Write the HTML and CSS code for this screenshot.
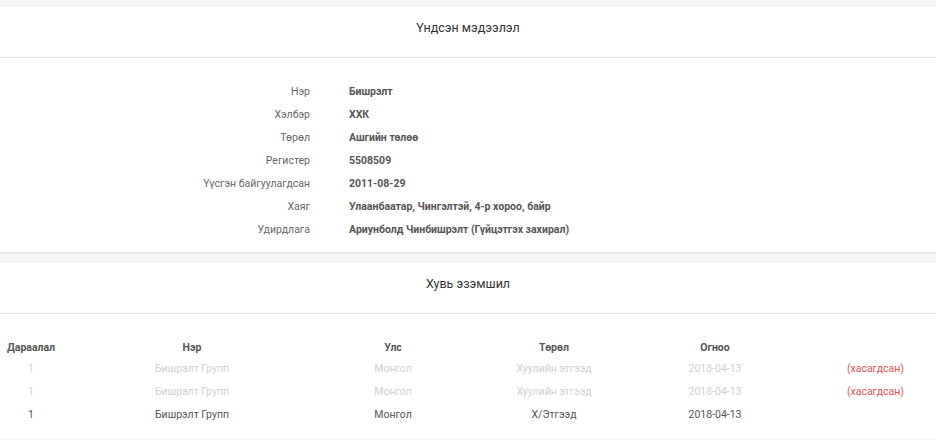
FILE: index.html
```html
<!DOCTYPE html>
<html lang="mn">
<head>
    <meta charset="UTF-8">
    <meta name="viewport" content="width=device-width, initial-scale=1.0">
    <title>Компанийн мэдээлэл</title>
    <link rel="stylesheet" href="styles.css">
</head>
<body>
    <div class="card">
        <div class="card-head">Үндсэн мэдээлэл</div>
        <div class="info">
            <div class="info-row"><span class="label">Нэр</span><span class="value">Бишрэлт</span></div>
            <div class="info-row"><span class="label">Хэлбэр</span><span class="value">ХХК</span></div>
            <div class="info-row"><span class="label">Төрөл</span><span class="value">Ашгийн төлөө</span></div>
            <div class="info-row"><span class="label">Регистер</span><span class="value">5508509</span></div>
            <div class="info-row"><span class="label">Үүсгэн байгуулагдсан</span><span class="value">2011-08-29</span></div>
            <div class="info-row"><span class="label">Хаяг</span><span class="value">Улаанбаатар, Чингэлтэй, 4-р хороо, байр</span></div>
            <div class="info-row"><span class="label">Удирдлага</span><span class="value">Ариунболд Чинбишрэлт (Гүйцэтгэх захирал)</span></div>
        </div>
    </div>

    <div class="card">
        <div class="card-head">Хувь эзэмшил</div>
        <div class="table-wrap">
            <table class="owners">
                <thead>
                    <tr>
                        <th class="c-no">Дараалал</th>
                        <th class="c-name">Нэр</th>
                        <th class="c-country">Улс</th>
                        <th class="c-type">Төрөл</th>
                        <th class="c-date">Огноо</th>
                        <th class="c-status"></th>
                    </tr>
                </thead>
                <tbody>
                    <tr class="removed">
                        <td>1</td>
                        <td>Бишрэлт Групп</td>
                        <td>Монгол</td>
                        <td>Хуулийн этгээд</td>
                        <td>2018-04-13</td>
                        <td class="c-status"><span class="tag">(хасагдсан)</span></td>
                    </tr>
                    <tr class="removed">
                        <td>1</td>
                        <td>Бишрэлт Групп</td>
                        <td>Монгол</td>
                        <td>Хуулийн этгээд</td>
                        <td>2018-04-13</td>
                        <td class="c-status"><span class="tag">(хасагдсан)</span></td>
                    </tr>
                    <tr>
                        <td>1</td>
                        <td>Бишрэлт Групп</td>
                        <td>Монгол</td>
                        <td>Х/Этгээд</td>
                        <td>2018-04-13</td>
                        <td class="c-status"></td>
                    </tr>
                </tbody>
            </table>
        </div>
    </div>
</body>
</html>
```

FILE: styles.css
```css
body {
    margin: 0;
    padding-top: 7px;
    background: #f5f5f5;
    font-family: Roboto, 'Liberation Sans', sans-serif;
    font-size: 10.5px;
    color: #555;
}
.card {
    background: #fff;
    box-shadow: 0 1px 2px rgba(0, 0, 0, 0.12);
}
.card + .card {
    margin-top: 11px;
}
.card-head {
    height: 50px;
    line-height: 42px;
    text-align: center;
    font-size: 12.5px;
    color: #333;
    border-bottom: 1px solid #e2e2e2;
}
.info {
    padding: 22px 0 11px;
}
.info-row {
    display: grid;
    grid-template-columns: 310px 1fr;
    column-gap: 39px;
    height: 23px;
    line-height: 23px;
}
.label {
    text-align: right;
    color: #666;
}
.value {
    font-weight: bold;
    color: #555;
}
.table-wrap {
    padding: 23px 0 13px;
}
.owners {
    width: 100%;
    border-collapse: collapse;
}
.owners th,
.owners td {
    padding: 0;
    height: 23px;
    text-align: center;
    font-weight: normal;
}
.owners th {
    height: 20px;
    font-weight: bold;
    color: #555;
}
.c-no { width: 62px; }
.c-name { width: 260px; }
.c-country { width: 142px; }
.c-type { width: 180px; }
.c-date { width: 142px; }
.owners .c-status {
    text-align: right;
    padding-right: 32px;
}
.removed td {
    color: #cfcfcf;
}
.removed .tag {
    color: #d9534f;
}
```
